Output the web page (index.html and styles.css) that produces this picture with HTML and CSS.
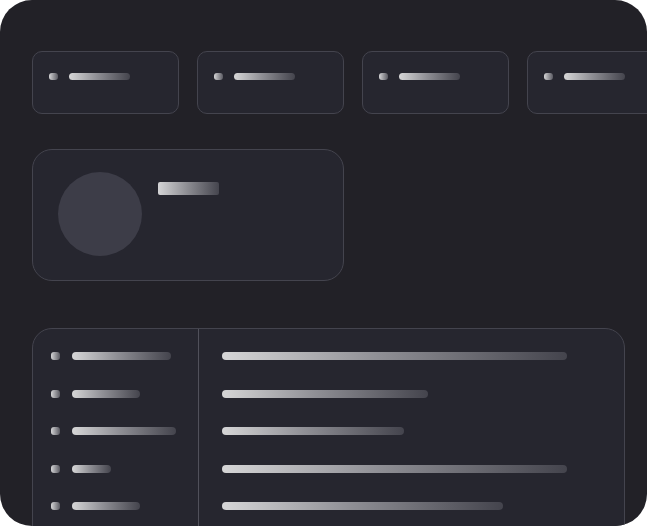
FILE: index.html
```html
<!DOCTYPE html>
<html>
<head>
<meta charset="utf-8">
<link rel="stylesheet" href="styles.css">
</head>
<body>
<div class="frame">
  <div class="stats">
    <div class="stat"><span class="dot"></span><span class="bar stat-bar"></span></div>
    <div class="stat"><span class="dot"></span><span class="bar stat-bar"></span></div>
    <div class="stat"><span class="dot"></span><span class="bar stat-bar"></span></div>
    <div class="stat"><span class="dot"></span><span class="bar stat-bar"></span></div>
  </div>
  <div class="profile">
    <div class="avatar"></div>
    <div class="title-bar"></div>
  </div>
  <div class="table">
    <div class="col-left">
      <div class="row"><span class="dot"></span><span class="bar" style="width:99px"></span></div>
      <div class="row"><span class="dot"></span><span class="bar" style="width:68px"></span></div>
      <div class="row"><span class="dot"></span><span class="bar" style="width:104px"></span></div>
      <div class="row"><span class="dot"></span><span class="bar" style="width:39px"></span></div>
      <div class="row"><span class="dot"></span><span class="bar" style="width:68px"></span></div>
    </div>
    <div class="col-right">
      <div class="row"><span class="bar" style="width:345px"></span></div>
      <div class="row"><span class="bar" style="width:206px"></span></div>
      <div class="row"><span class="bar" style="width:182px"></span></div>
      <div class="row"><span class="bar" style="width:345px"></span></div>
      <div class="row"><span class="bar" style="width:281px"></span></div>
    </div>
  </div>
</div>
</body>
</html>
```
FILE: styles.css
```css
html, body {
  margin: 0;
  padding: 0;
  background: #ffffff;
}
.frame {
  width: 647px;
  height: 526px;
  box-sizing: border-box;
  border-radius: 32px;
  background: #222127;
  overflow: hidden;
  padding: 51px 0 0 32px;
  display: flex;
  flex-direction: column;
}
.stats {
  flex: none;
  display: flex;
  gap: 18px;
}
.stat {
  flex: none;
  width: 147px;
  height: 63px;
  box-sizing: border-box;
  border: 1px solid #44444e;
  border-radius: 10px;
  background: #26262f;
  display: flex;
  align-items: flex-start;
  gap: 11px;
  padding: 21px 0 0 16px;
}
.dot {
  flex: none;
  width: 9px;
  height: 7px;
  border-radius: 3px;
  background: linear-gradient(90deg, #d4d4d6, #5a5a62);
}
.bar {
  display: block;
  flex: none;
  height: 7px;
  border-radius: 4px;
  background: linear-gradient(90deg, #d6d6d7 0%, #909096 45%, #44444d 100%);
}
.stat-bar {
  width: 61px;
}
.profile {
  flex: none;
  margin-top: 35px;
  width: 312px;
  height: 132px;
  box-sizing: border-box;
  border: 1px solid #44444e;
  border-radius: 20px;
  background: #26262f;
  display: flex;
  align-items: flex-start;
  gap: 16px;
  padding: 22px 0 0 25px;
}
.avatar {
  flex: none;
  width: 84px;
  height: 84px;
  border-radius: 50%;
  background: #3d3d48;
}
.title-bar {
  flex: none;
  width: 61px;
  height: 13px;
  margin-top: 10px;
  border-radius: 2px;
  background: linear-gradient(90deg, #d4d4d6 0%, #8a8a90 50%, #45454e 100%);
}
.table {
  flex: none;
  margin-top: 47px;
  width: 593px;
  height: 240px;
  box-sizing: border-box;
  border: 1px solid #44444e;
  border-radius: 20px;
  background: #26262f;
  display: grid;
  grid-template-columns: 166px 1fr;
}
.col-left, .col-right {
  display: flex;
  flex-direction: column;
  gap: 29.5px;
  padding-top: 23px;
}
.col-left {
  border-right: 1px solid #50505a;
  padding-left: 18px;
}
.col-right {
  padding-left: 23px;
}
.row {
  display: flex;
  align-items: center;
  gap: 12px;
  height: 8px;
}
.row .bar {
  height: 8px;
}
.row .dot {
  height: 8px;
}
```
